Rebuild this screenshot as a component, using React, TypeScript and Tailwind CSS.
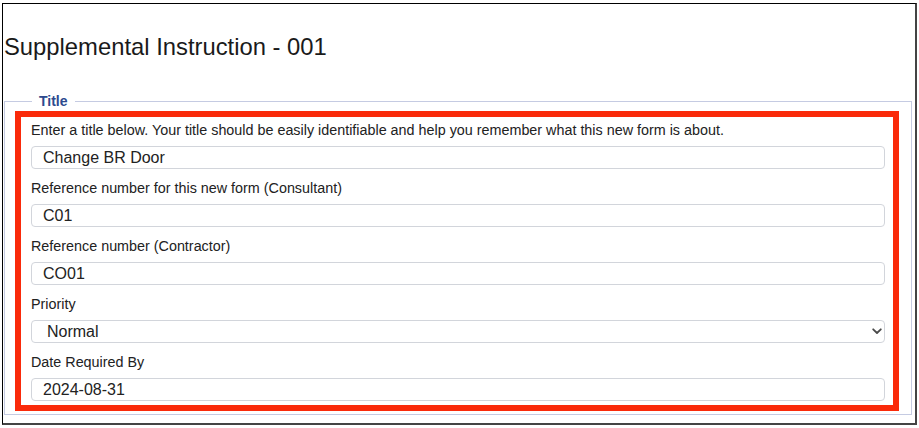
import React from "react";

const inputCls =
  "block w-full h-[23px] rounded-[4px] border border-[#d2d5db] bg-white pl-[11px] pr-2 text-[16px] leading-[19px] text-[#222] outline-none";

function Label({ children }: { children: React.ReactNode }) {
  return <div className="h-[20px] text-[14.35px] leading-[20px] text-[#222] whitespace-nowrap">{children}</div>;
}

export default function App() {
  return (
    <div className="w-[919px] h-[428px] bg-white" style={{ fontFamily: '"Liberation Sans", Arial, sans-serif' }}>
      <div className="ml-[2px] pt-[3px]">
        <div className="w-[915px] h-[422px] border-l border-t border-black border-r-2 border-b-2 border-r-[#444] border-b-[#444] flex flex-col">
          <h1 className="mt-[29px] ml-[1px] text-[23.8px] leading-[28px] font-normal text-[#1a1a1a]">
            Supplemental Instruction - 001
          </h1>
          <fieldset className="mt-[32px] ml-[1px] mr-[3px] border border-[#c5cbe2] pl-[10px] pr-[12px] pb-[3px]">
            <legend className="ml-[17px] px-[7px] text-[14px] leading-[16px] font-bold text-[#2d4a8e]">Title</legend>
            <div className="mt-[2px] border-[6px] border-[#fa2a0a] pl-[10px] pr-[8px] pt-[3px] pb-[4px] flex flex-col">
              <Label>
                Enter a title below. Your title should be easily identifiable and help you remember what this new form is about.
              </Label>
              <input className={inputCls + " mt-[6px]"} defaultValue="Change BR Door" readOnly />
              <div className="mt-[9px]">
                <Label>Reference number for this new form (Consultant)</Label>
              </div>
              <input className={inputCls + " mt-[6px]"} defaultValue="C01" readOnly />
              <div className="mt-[9px]">
                <Label>Reference number (Contractor)</Label>
              </div>
              <input className={inputCls + " mt-[6px]"} defaultValue="CO01" readOnly />
              <div className="mt-[9px]">
                <Label>Priority</Label>
              </div>
              <div className="relative mt-[6px]">
                <select
                  className="block w-full h-[23px] appearance-none rounded-[4px] border border-[#d2d5db] bg-white pl-[15px] pr-6 text-[16px] leading-[19px] text-[#222] outline-none"
                  defaultValue="Normal"
                >
                  <option>Normal</option>
                  <option>High</option>
                  <option>Low</option>
                </select>
                <svg
                  className="pointer-events-none absolute right-[3px] top-[8px]"
                  width="10"
                  height="7"
                  viewBox="0 0 10 7"
                >
                  <path d="M1.2 1.3 L5 5 L8.8 1.3" fill="none" stroke="#4a4a4a" strokeWidth="1.8" strokeLinecap="round" strokeLinejoin="round" />
                </svg>
              </div>
              <div className="mt-[9px]">
                <Label>Date Required By</Label>
              </div>
              <input className={inputCls + " mt-[6px]"} defaultValue="2024-08-31" readOnly />
            </div>
          </fieldset>
        </div>
      </div>
    </div>
  );
}
